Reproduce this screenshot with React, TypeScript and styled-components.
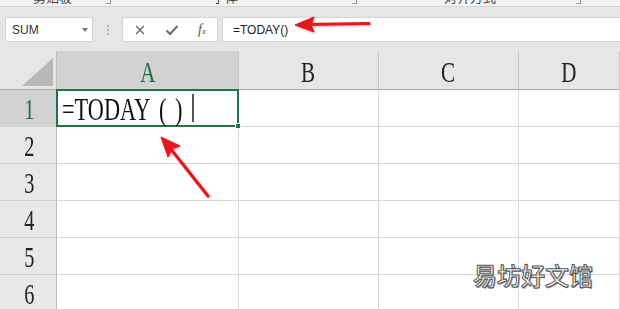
import React from "react";
import styled, { createGlobalStyle } from "styled-components";

const Global = createGlobalStyle`
  html, body { margin: 0; padding: 0; }
  *, *::before, *::after { box-sizing: border-box; }
  body { width: 620px; height: 309px; overflow: hidden; background: #e6e6e6; font-family: "Liberation Sans", Arial, sans-serif; }
`;

const Page = styled.div`
  position: relative;
  width: 620px;
  height: 309px;
  overflow: hidden;
  display: flex;
  flex-direction: column;
`;

const Ribbon = styled.div`
  flex: none;
  height: 7px;
  background: #f3f3f3;
  border-bottom: 1px solid #d6d6d6;
  position: relative;
  overflow: hidden;
  font-family: "Noto Sans CJK SC", sans-serif;
  font-size: 13px;
  color: #444;
`;

const RibbonLabel = styled.span<{ $left: number }>`
  position: absolute;
  left: ${(p) => p.$left}px;
  top: -10px;
  line-height: 14px;
`;

const RibbonMark = styled.span<{ $left: number }>`
  position: absolute;
  left: ${(p) => p.$left}px;
  top: -4px;
  width: 5px;
  height: 8px;
  border-right: 1px solid #999;
  border-bottom: 1px solid #999;
`;

const FormulaBar = styled.div`
  flex: none;
  height: 25px;
  margin-top: 10px;
  display: flex;
  align-items: stretch;
  padding-left: 5px;
`;

const NameBox = styled.div`
  width: 88px;
  background: #fff;
  border: 1px solid #d4d4d4;
  display: flex;
  align-items: center;
  justify-content: space-between;
  padding: 0 4px 0 6px;
  font-size: 12px;
  color: #333;
`;

const Caret = styled.span`
  width: 0;
  height: 0;
  border-left: 3.5px solid transparent;
  border-right: 3.5px solid transparent;
  border-top: 4px solid #777;
`;

const Dots = styled.div`
  width: 29px;
  display: flex;
  flex-direction: column;
  align-items: center;
  justify-content: center;
  gap: 2px;
  & > span { width: 2px; height: 2px; background: #b5b5b5; display: block; }
`;

const ButtonBox = styled.div`
  width: 96px;
  background: #fff;
  border: 1px solid #d4d4d4;
  display: flex;
  align-items: center;
  justify-content: space-between;
  padding: 0 11px 0 11px;
  color: #6a6a6a;
`;

const Fx = styled.span`
  font-family: "Liberation Serif", serif;
  font-style: italic;
  font-size: 14px;
  color: #555;
  & > sub { font-size: 9px; vertical-align: baseline; }
`;

const FormulaInput = styled.div`
  flex: 1;
  margin-left: 4px;
  background: #fff;
  border: 1px solid #d4d4d4;
  border-right: none;
  display: flex;
  align-items: center;
  padding-left: 10px;
  font-size: 12px;
  color: #222;
`;

const Grid = styled.div`
  flex: none;
  margin-top: 9px;
  display: grid;
  grid-template-columns: 57px 182px 140px 140px 101px;
  grid-template-rows: 39px repeat(6, 37px);
  background: #fff;
`;

const Corner = styled.div`
  background: #e6e6e6;
  border-right: 1px solid #bdbdbd;
  border-bottom: 1px solid #a8a8a8;
  position: relative;
  &::after {
    content: "";
    position: absolute;
    right: 3px;
    bottom: 3px;
    width: 0;
    height: 0;
    border-left: 31px solid transparent;
    border-bottom: 28px solid #b8b8b8;
  }
`;

const Narrow = styled.span`
  display: inline-block;
  transform: scaleX(0.7);
`;

const ColHead = styled.div<{ $sel?: boolean }>`
  background: ${(p) => (p.$sel ? "#d2d2d2" : "#e6e6e6")};
  border-right: 1px solid ${(p) => (p.$sel ? "#c8c8c8" : "#c4c4c4")};
  border-bottom: 1px solid #a8a8a8;
  display: flex;
  align-items: center;
  justify-content: center;
  font-family: "Liberation Serif", serif;
  font-size: 30px;
  color: ${(p) => (p.$sel ? "#1f6b43" : "#222")};
  padding-top: 4px;
`;

const RowHead = styled.div<{ $sel?: boolean }>`
  background: ${(p) => (p.$sel ? "#d2d2d2" : "#e8e8e8")};
  border-right: 1px solid #bdbdbd;
  border-bottom: 1px solid #d0d0d0;
  display: flex;
  align-items: center;
  justify-content: center;
  font-family: "Liberation Serif", serif;
  font-size: 29px;
  color: ${(p) => (p.$sel ? "#1f6b43" : "#222")};
  padding-left: 3px;
  padding-top: 3px;
`;

const Cell = styled.div`
  border-right: 1px solid #d8d8d8;
  border-bottom: 1px solid #d8d8d8;
`;

const ActiveCell = styled.div`
  position: relative;
  border: 2px solid #217346;
  margin: -1px 0 0 -1px;
  background: #fff;
  display: flex;
  align-items: center;
  padding-left: 4px;
  padding-top: 3px;
  font-family: "Liberation Serif", serif;
  font-size: 31px;
  color: #111;
  z-index: 1;
  &::after {
    content: "";
    position: absolute;
    right: -4px;
    bottom: -4px;
    width: 6px;
    height: 6px;
    background: #217346;
    border: 1px solid #fff;
  }
`;

const CellText = styled.span`
  display: inline-block;
  white-space: pre;
  transform: scaleX(0.72);
  transform-origin: left center;
  width: 180px;
  margin-right: -50px;
`;

const Paren = styled.span`
  margin-left: 12px;
`;

const TextCursor = styled.span`
  display: block;
  width: 2px;
  height: 28px;
  background: #555;
  margin-top: -3px;
`;

const Overlay = styled.svg`
  position: absolute;
  left: 0;
  top: 0;
  pointer-events: none;
  z-index: 5;
`;

const Watermark = styled.div`
  position: absolute;
  left: 473px;
  top: 257px;
  font-family: "Noto Sans CJK SC", sans-serif;
  font-size: 24px;
  font-weight: 500;
  color: #fff;
  -webkit-text-stroke: 1px #555;
  text-shadow: 1px 1px 0 #999;
  z-index: 6;
`;

const ribbonLabels = [
  { left: 33, text: "剪贴板" },
  { left: 212, text: "字体" },
  { left: 444, text: "对齐方式" },
];

export default function App() {
  const cols = ["A", "B", "C", "D"];
  const rows = [1, 2, 3, 4, 5, 6];
  return (
    <>
      <Global />
      <Page>
        <Ribbon>
          {ribbonLabels.map((l) => (
            <RibbonLabel key={l.text} $left={l.left}>{l.text}</RibbonLabel>
          ))}
          <RibbonMark $left={106} />
          <RibbonMark $left={352} />
          <RibbonMark $left={576} />
        </Ribbon>
        <FormulaBar>
          <NameBox>
            <span>SUM</span>
            <Caret />
          </NameBox>
          <Dots><span /><span /><span /></Dots>
          <ButtonBox>
            <svg width="12" height="12" viewBox="0 0 12 12"><path d="M2 2 L10 10 M10 2 L2 10" stroke="#6a6a6a" strokeWidth="1.4" /></svg>
            <svg width="14" height="12" viewBox="0 0 14 12"><path d="M1.5 6.5 L5 10 L12.5 2" stroke="#6a6a6a" strokeWidth="2" fill="none" /></svg>
            <Fx>f<sub>x</sub></Fx>
          </ButtonBox>
          <FormulaInput>=TODAY()</FormulaInput>
        </FormulaBar>
        <Grid>
          <Corner />
          {cols.map((c) => (
            <ColHead key={c} $sel={c === "A"}><Narrow>{c}</Narrow></ColHead>
          ))}
          {rows.map((r) => (
            <React.Fragment key={r}>
              <RowHead $sel={r === 1}><Narrow>{r}</Narrow></RowHead>
              {r === 1 ? (
                <ActiveCell>
                  <CellText>=TODAY<Paren>(</Paren><Paren>)</Paren></CellText>
                  <TextCursor />
                </ActiveCell>
              ) : (
                <Cell />
              )}
              <Cell />
              <Cell />
              <Cell />
            </React.Fragment>
          ))}
        </Grid>
        <Overlay width="620" height="309" viewBox="0 0 620 309">
          <defs>
            <filter id="sh" x="-20%" y="-20%" width="140%" height="140%">
              <feDropShadow dx="1" dy="1" stdDeviation="1" floodColor="#000" floodOpacity="0.3" />
            </filter>
          </defs>
          <g filter="url(#sh)" fill="#e5141b" stroke="#e5141b">
            <line x1="369" y1="23.5" x2="308" y2="24.5" strokeWidth="3" strokeLinecap="round" />
            <path d="M295 25 L314 17 L311 25 L314 32 Z" strokeWidth="1" strokeLinejoin="round" />
            <line x1="208" y1="196" x2="170" y2="148" strokeWidth="3" strokeLinecap="round" />
            <path d="M161 137 L180 146 L172 149 L168 157 Z" strokeWidth="1" strokeLinejoin="round" />
          </g>
        </Overlay>
        <Watermark>易坊好文馆</Watermark>
      </Page>
    </>
  );
}
